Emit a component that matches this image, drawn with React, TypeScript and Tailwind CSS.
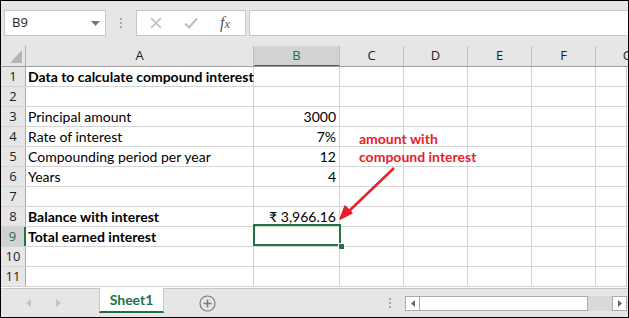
import React from "react";

const cols = [
  { key: "A", w: "w-[228px]" },
  { key: "B", w: "w-[86px]" },
  { key: "C", w: "w-[64px]" },
  { key: "D", w: "w-[64px]" },
  { key: "E", w: "w-[64px]" },
  { key: "F", w: "w-[64px]" },
  { key: "G", w: "w-[64px]" },
];

type Row = { n: number; a?: string; b?: string; bold?: boolean };
const rows: Row[] = [
  { n: 1, a: "Data to calculate compound interest", bold: true },
  { n: 2 },
  { n: 3, a: "Principal amount", b: "3000" },
  { n: 4, a: "Rate of interest", b: "7%" },
  { n: 5, a: "Compounding period per year", b: "12" },
  { n: 6, a: "Years", b: "4" },
  { n: 7 },
  { n: 8, a: "Balance with interest", b: "₹ 3,966.16", bold: true },
  { n: 9, a: "Total earned interest", bold: true },
  { n: 10 },
  { n: 11 },
];

const cellFont = { fontFamily: "Lato, 'Open Sans', sans-serif" };
const uiFont = { fontFamily: "'Open Sans', 'Noto Sans', sans-serif" };

export default function App() {
  return (
    <div className="w-[629px] h-[318px] border border-black bg-[#e6e6e6] flex flex-col overflow-hidden relative">
      {/* toolbar */}
      <div className="h-[45px] flex items-start pt-[9px] shrink-0">
        <div className="ml-[3px] w-[102px] h-[26px] bg-white border border-[#c6c6c6] flex items-center pl-[7px] pr-[5px] text-[13px] text-[#222]" style={uiFont}>
          <span className="flex-1">B9</span>
          <svg width="9" height="5" viewBox="0 0 9 5"><path d="M0 0h9L4.5 5z" fill="#777" /></svg>
        </div>
        <div className="w-[30px] h-[26px] flex flex-col items-center justify-center gap-[2px]">
          <span className="w-[2px] h-[2px] bg-[#a8a8a8]" />
          <span className="w-[2px] h-[2px] bg-[#a8a8a8]" />
          <span className="w-[2px] h-[2px] bg-[#a8a8a8]" />
        </div>
        <div className="w-[110px] h-[26px] bg-white border border-[#c6c6c6] flex items-center">
          <svg className="ml-[13px]" width="12" height="12" viewBox="0 0 12 12"><path d="M1 1l10 10M11 1L1 11" stroke="#bdbdbd" strokeWidth="1.6" /></svg>
          <svg className="ml-[22px]" width="14" height="12" viewBox="0 0 14 12"><path d="M1 6.5l4 4L13 1.5" stroke="#bdbdbd" strokeWidth="2" fill="none" /></svg>
          <span className="ml-[22px] text-[16px] italic text-[#555] leading-none" style={{ fontFamily: "'Liberation Serif', serif" }}>f<span className="text-[12px]">x</span></span>
        </div>
        <div className="ml-[3px] flex-1 h-[26px] bg-white border border-[#c6c6c6] border-r-0" />
      </div>

      {/* grid */}
      <div className="flex-1 bg-white relative overflow-hidden" style={cellFont}>
        {/* header row */}
        <div className="flex h-[21px] bg-[#e6e6e6] border-b border-[#9e9e9e] overflow-hidden" style={uiFont}>
          <div className="w-[25px] shrink-0 border-r border-[#ababab] relative">
            <svg className="absolute left-[9px] top-[4px]" width="12" height="13" viewBox="0 0 12 13"><path d="M12 0v13H0z" fill="#b4b4b4" /></svg>
          </div>
          {cols.map((c) => (
            <div
              key={c.key}
              className={`${c.w} shrink-0 flex items-center justify-center text-[13px] border-r border-[#c0c0c0] ${
                c.key === "B"
                  ? "bg-[#d2d2d2] text-[#217346] border-b-2 border-b-[#217346] -mb-[1px]"
                  : "text-[#222]"
              }`}
            >
              {c.key}
            </div>
          ))}
        </div>
        {rows.map((r) => (
          <div key={r.n} className="flex h-[20px] border-b border-[#d4d4d4]">
            <div
              className={`w-[25px] shrink-0 flex items-center justify-center text-[13px] border-r ${
                r.n === 9
                  ? "bg-[#d2d2d2] text-[#217346] border-r-2 border-r-[#217346]"
                  : "bg-[#e6e6e6] text-[#222] border-[#ababab]"
              }`}
              style={uiFont}
            >
              {r.n}
            </div>
            <div className={`w-[228px] shrink-0 border-r border-[#d4d4d4] flex items-center pl-[2px] text-[14px] text-black whitespace-nowrap ${r.bold ? "font-bold" : ""}`}>
              {r.a}
            </div>
            <div className="w-[86px] shrink-0 border-r border-[#d4d4d4] flex items-center justify-end pr-[3px] text-[14px] text-black whitespace-nowrap">
              {r.b}
            </div>
            <div className="w-[64px] shrink-0 border-r border-[#d4d4d4]" />
            <div className="w-[64px] shrink-0 border-r border-[#d4d4d4]" />
            <div className="w-[64px] shrink-0 border-r border-[#d4d4d4]" />
            <div className="w-[64px] shrink-0 border-r border-[#d4d4d4]" />
            <div className="flex-1 border-r border-[#c6c6c6] mr-[1px]" />
          </div>
        ))}

        {/* selection */}
        <div className="absolute left-[252px] top-[178px] w-[88px] h-[22px] border-2 border-[#217346]" />
        <div className="absolute left-[337px] top-[197px] w-[5px] h-[5px] bg-[#217346] border border-white box-content" />

        {/* annotation */}
        <div className="absolute left-[358px] top-[84px] text-[14px] font-bold text-[#e8202a] leading-[18px]" style={{ fontFamily: "Lato, sans-serif" }}>
          <div>amount with</div>
          <div>compound interest</div>
        </div>
        <svg className="absolute left-0 top-0 pointer-events-none" width="627" height="250">
          <line x1="393" y1="122" x2="345" y2="168" stroke="#e8202a" strokeWidth="2.5" />
          <path d="M339 173 L344 160 L351 167 Z" fill="#e8202a" stroke="#e8202a" strokeWidth="1.5" strokeLinejoin="round" />
        </svg>
      </div>

      {/* tab bar */}
      <div className="h-[29px] shrink-0 border-t border-[#c6c6c6] flex items-start relative">
        <div className="w-[98px] h-full flex items-center">
          <svg className="ml-[25px]" width="5" height="8" viewBox="0 0 5 8"><path d="M5 0v8L0 4z" fill="#c3c3c3" /></svg>
          <svg className="ml-[25px]" width="5" height="8" viewBox="0 0 5 8"><path d="M0 0v8l5-4z" fill="#c3c3c3" /></svg>
        </div>
        <div className="w-[65px] h-[25px] -mt-[1px] bg-white border-x border-[#c6c6c6] border-b-2 border-b-[#217346] flex items-center justify-center text-[14px] font-bold text-[#217346]" style={cellFont}>
          Sheet1
        </div>
        <div className="w-[86px] h-full flex items-center justify-center">
          <svg width="17" height="17" viewBox="0 0 17 17">
            <circle cx="8.5" cy="8.5" r="7.5" fill="none" stroke="#7a7a7a" strokeWidth="1.2" />
            <path d="M8.5 4.5v8M4.5 8.5h8" stroke="#7a7a7a" strokeWidth="1.5" />
          </svg>
        </div>
        <div className="flex-1" />
        <div className="w-[2px] h-full flex flex-col items-center justify-center gap-[2px] mr-[14px]">
          <span className="w-[2px] h-[2px] bg-[#a8a8a8]" />
          <span className="w-[2px] h-[2px] bg-[#a8a8a8]" />
          <span className="w-[2px] h-[2px] bg-[#a8a8a8]" />
        </div>
        <div className="w-[222px] h-[15px] mt-[7px] flex mr-[1px]">
          <div className="w-[15px] h-full bg-white border border-[#ababab] flex items-center justify-center">
            <svg width="4" height="7" viewBox="0 0 4 7"><path d="M4 0v7L0 3.5z" fill="#666" /></svg>
          </div>
          <div className="w-[168px] h-full bg-white border border-[#ababab] border-l-0" />
          <div className="flex-1 h-full bg-[#d9d9d9]" />
          <div className="w-[15px] h-full bg-white border border-[#ababab] flex items-center justify-center">
            <svg width="4" height="7" viewBox="0 0 4 7"><path d="M0 0v7l4-3.5z" fill="#666" /></svg>
          </div>
        </div>
      </div>
    </div>
  );
}
